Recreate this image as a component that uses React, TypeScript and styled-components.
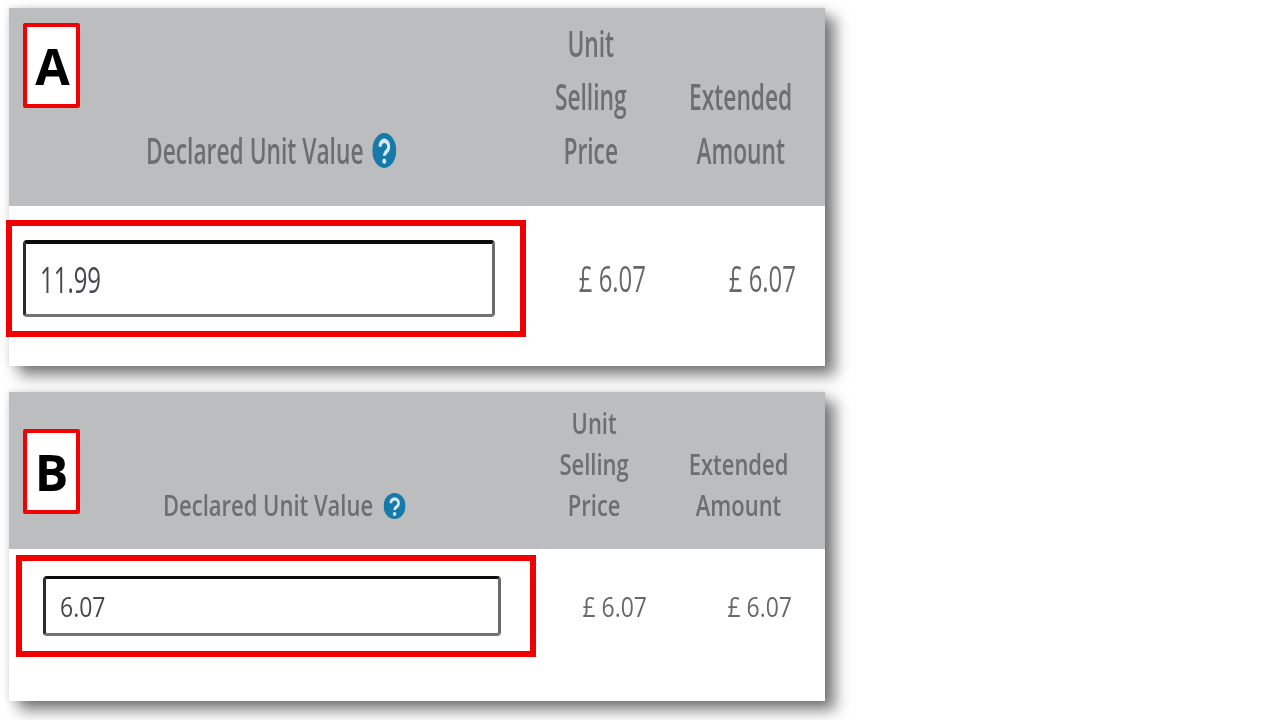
import React from "react";
import styled, { createGlobalStyle } from "styled-components";

const Global = createGlobalStyle`
  html, body { margin: 0; padding: 0; background: #fff; }
  body { font-family: "Open Sans", "Liberation Sans", sans-serif; }
`;

type Spec = {
  letter: string; value: string; letterPad: number;
  headerH: number; rowH: number; font: number; scale: number; valueScale: number; line: number;
  headerPad: number; col1: number; col: number; labelLeft: number;
  badgeTop: number; iconW: number; iconH: number; iconGap: number;
  rowPad: number; boxLeft: number; boxH: number; fieldLeft: number; fieldTop: number;
  fieldW: number; fieldH: number; fieldPad: number; fieldTopBorder: number; cellPad: number;
};

const panels: Spec[] = [
  { letter: "A", value: "11.99", letterPad: 2, headerH: 198, rowH: 160, font: 36, scale: 0.632, valueScale: 0.665, line: 53.5,
    headerPad: 29, col1: 507, col: 150, labelLeft: 137, badgeTop: 15, iconW: 38, iconH: 35, iconGap: 14,
    rowPad: 14, boxLeft: -3, boxH: 117, fieldLeft: 11, fieldTop: 14, fieldW: 472, fieldH: 77, fieldPad: 14, fieldTopBorder: 4, cellPad: 20 },
  { letter: "B", value: "6.07", letterPad: 0, headerH: 157, rowH: 152, font: 28, scale: 0.785, valueScale: 0.82, line: 41,
    headerPad: 23, col1: 512.5, col: 145, labelLeft: 154, badgeTop: 37, iconW: 28, iconH: 26, iconGap: 13,
    rowPad: 6, boxLeft: 7, boxH: 102, fieldLeft: 21, fieldTop: 15, fieldW: 458, fieldH: 60, fieldPad: 14, fieldTopBorder: 3, cellPad: 20 },
];

const Page = styled.main`
  display: flex;
  flex-direction: column;
  gap: 26px;
  padding: 8px 0 0 9px;
  width: 1280px;
  height: 720px;
  box-sizing: border-box;
  overflow: hidden;
  background: #fff;
`;

const Panel = styled.section`
  position: relative;
  width: 816px;
  background: #fff;
  box-shadow: 10px 9px 14px rgba(0, 0, 0, 0.52), 0 0 7px rgba(0, 0, 0, 0.13);
`;

const HeaderRow = styled.header<{ $h: number; $c1: number; $c: number; $pad: number }>`
  display: grid;
  grid-template-columns: ${(p) => p.$c1}px ${(p) => p.$c}px ${(p) => p.$c}px;
  align-items: end;
  height: ${(p) => p.$h}px;
  padding-bottom: ${(p) => p.$pad}px;
  box-sizing: border-box;
  background: #bcbdbf;
`;

const Badge = styled.div<{ $top: number; $pad: number }>`
  position: absolute;
  left: 14px;
  top: ${(p) => p.$top}px;
  width: 57px;
  height: 85px;
  box-sizing: border-box;
  display: flex;
  align-items: center;
  justify-content: center;
  padding-left: ${(p) => p.$pad}px;
  background: #fff;
  border: 4px solid #f00000;
  border-radius: 2px;
  color: #000;
  font-size: 50px;
  font-weight: 700;
  line-height: 1;
`;

const LabelCell = styled.div<{ $left: number }>`
  padding-left: ${(p) => p.$left}px;
`;

const Label = styled.div<{ $font: number; $scale: number; $line: number }>`
  display: inline-flex;
  align-items: center;
  white-space: nowrap;
  color: #6c6e71;
  font-size: ${(p) => p.$font}px;
  font-weight: 600;
  line-height: ${(p) => p.$line}px;
  transform: scaleX(${(p) => p.$scale});
  transform-origin: left center;
  filter: blur(0.6px);
`;

const HelpIcon = styled.svg<{ $w: number; $h: number; $gap: number }>`
  width: ${(p) => p.$w}px;
  height: ${(p) => p.$h}px;
  margin-left: ${(p) => p.$gap}px;
  flex: none;
`;

const ColumnHead = styled.div<{ $font: number; $scale: number; $line: number }>`
  justify-self: center;
  text-align: center;
  color: #6c6e71;
  font-size: ${(p) => p.$font}px;
  font-weight: 600;
  line-height: ${(p) => p.$line}px;
  white-space: nowrap;
  transform: scaleX(${(p) => p.$scale});
  filter: blur(0.6px);
`;

const BodyRow = styled.div<{ $h: number; $c1: number; $c: number; $pad: number }>`
  display: grid;
  grid-template-columns: ${(p) => p.$c1}px ${(p) => p.$c}px ${(p) => p.$c}px;
  align-items: start;
  height: ${(p) => p.$h}px;
  padding-top: ${(p) => p.$pad}px;
  box-sizing: border-box;
`;

const Highlight = styled.div<{ $left: number; $h: number; $pl: number; $pt: number }>`
  width: 520px;
  height: ${(p) => p.$h}px;
  margin-left: ${(p) => p.$left}px;
  padding: ${(p) => p.$pt}px 0 0 ${(p) => p.$pl}px;
  box-sizing: border-box;
  border: 6px solid #f00000;
`;

const Field = styled.div<{ $w: number; $h: number; $pad: number; $top: number }>`
  display: flex;
  align-items: center;
  width: ${(p) => p.$w}px;
  height: ${(p) => p.$h}px;
  padding-left: ${(p) => p.$pad}px;
  box-sizing: border-box;
  background: #fff;
  border-style: solid;
  border-width: ${(p) => p.$top}px 3px 3px 3px;
  border-color: #0c0c0c #6a6a6a #737373 #2b2b2b;
  border-radius: 4px;
  filter: blur(0.4px);
`;

const FieldText = styled.span<{ $font: number; $scale: number }>`
  display: block;
  color: #45474d;
  font-size: ${(p) => p.$font}px;
  font-weight: 500;
  transform: scaleX(${(p) => p.$scale});
  transform-origin: left center;
`;

const Amount = styled.div<{ $h: number; $pad: number; $font: number; $scale: number }>`
  height: ${(p) => p.$h}px;
  line-height: ${(p) => p.$h + 1}px;
  padding-right: ${(p) => p.$pad}px;
  text-align: right;
  color: #66686b;
  font-size: ${(p) => p.$font}px;
  font-weight: 500;
  white-space: nowrap;
  transform: scaleX(${(p) => p.$scale});
  transform-origin: calc(100% - ${(p) => p.$pad}px) center;
  filter: blur(0.5px);
`;

const Help = ({ s }: { s: Spec }) => (
  <HelpIcon $w={s.iconW} $h={s.iconH} $gap={s.iconGap} viewBox="0 0 24 24" preserveAspectRatio="none" aria-hidden="true">
    <circle cx="12" cy="12" r="12" fill="#1579a9" />
    <path d="M7.8 9.4a4.3 3.9 0 1 1 6.6 3.2c-1.6 1-2.4 1.6-2.4 3" fill="none" stroke="#d9e6ee" strokeWidth="3" />
    <circle cx="12" cy="19.4" r="1.9" fill="#d9e6ee" />
  </HelpIcon>
);

const DeclaredPanel = ({ s }: { s: Spec }) => {
  const text = { $font: s.font, $scale: s.scale, $line: s.line };
  const amount = { $h: s.boxH, $pad: s.cellPad, $font: s.font, $scale: s.valueScale };
  return (
    <Panel>
      <HeaderRow $h={s.headerH} $c1={s.col1} $c={s.col} $pad={s.headerPad}>
        <LabelCell $left={s.labelLeft}>
          <Label {...text}>
            Declared Unit Value
            <Help s={s} />
          </Label>
        </LabelCell>
        <ColumnHead {...text}>Unit<br />Selling<br />Price</ColumnHead>
        <ColumnHead {...text}>Extended<br />Amount</ColumnHead>
      </HeaderRow>
      <Badge $top={s.badgeTop} $pad={s.letterPad}>{s.letter}</Badge>
      <BodyRow $h={s.rowH} $c1={s.col1} $c={s.col} $pad={s.rowPad}>
        <Highlight $left={s.boxLeft} $h={s.boxH} $pl={s.fieldLeft} $pt={s.fieldTop}>
          <Field $w={s.fieldW} $h={s.fieldH} $pad={s.fieldPad} $top={s.fieldTopBorder}>
            <FieldText $font={s.font} $scale={s.valueScale}>{s.value}</FieldText>
          </Field>
        </Highlight>
        <Amount {...amount}>£ 6.07</Amount>
        <Amount {...amount}>£ 6.07</Amount>
      </BodyRow>
    </Panel>
  );
};

export default function App() {
  return (
    <>
      <Global />
      <Page>
        {panels.map((s) => (
          <DeclaredPanel key={s.letter} s={s} />
        ))}
      </Page>
    </>
  );
}
